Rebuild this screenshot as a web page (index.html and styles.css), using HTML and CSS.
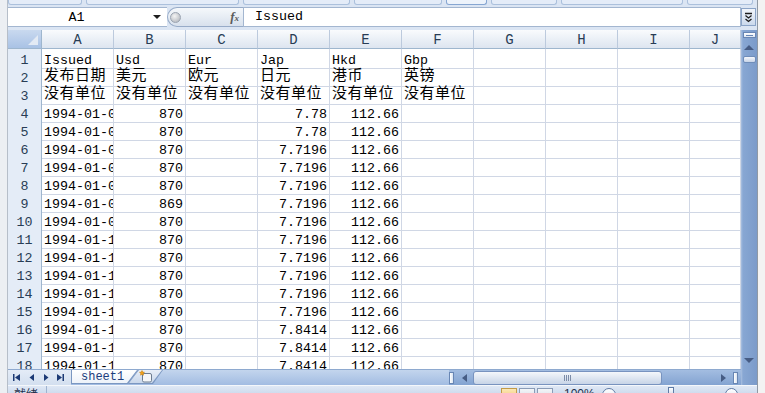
FILE: index.html
```html
<!DOCTYPE html>
<html lang="zh-CN">
  <head>
    <meta charset="UTF-8" />
    <title>sheet1</title>
    <link rel="stylesheet" href="styles.css">
  </head>
  <body>
    <div class="frame-left"></div>

    <div class="excel">
      <div class="ribbon-edge">
        <span></span><span></span><span></span><span></span>
        <span class="on"></span><span></span><span></span><span></span>
      </div>

      <div class="formula-bar">
        <div class="name-box"><span class="ref">A1</span><span class="caret"></span></div>
        <div class="fx-pill"><span class="knob"></span><span class="fx">f<small>x</small></span></div>
        <div class="formula-input">Issued</div>
        <div class="expand">
          <svg width="9" height="11" viewBox="0 0 9 11">
            <path d="M1 1.5h7M1.5 3.5l3 2.5 3-2.5M1.5 7l3 2.5 3-2.5" fill="none" stroke="#1d1d1d" stroke-width="1.3"/>
          </svg>
        </div>
      </div>

      <div class="sheet">
        <div class="grid">
          <div class="row head">
            <div class="corner"></div>
            <div class="ch">A</div><div class="ch">B</div><div class="ch">C</div><div class="ch">D</div><div class="ch">E</div>
            <div class="ch">F</div><div class="ch">G</div><div class="ch">H</div><div class="ch">I</div><div class="ch">J</div>
          </div>
          <div class="row">
            <div class="rh">1</div><div class="c">Issued</div><div class="c">Usd</div><div class="c">Eur</div><div class="c">Jap</div><div class="c">Hkd</div><div class="c">Gbp</div><div class="c"></div><div class="c"></div><div class="c"></div><div class="c"></div>
          </div>
          <div class="row cjk">
            <div class="rh">2</div><div class="c">发布日期</div><div class="c">美元</div><div class="c">欧元</div><div class="c">日元</div><div class="c">港币</div><div class="c">英镑</div><div class="c"></div><div class="c"></div><div class="c"></div><div class="c"></div>
          </div>
          <div class="row cjk">
            <div class="rh">3</div><div class="c">没有单位</div><div class="c">没有单位</div><div class="c">没有单位</div><div class="c">没有单位</div><div class="c">没有单位</div><div class="c">没有单位</div><div class="c"></div><div class="c"></div><div class="c"></div><div class="c"></div>
          </div>
          <div class="row">
            <div class="rh">4</div><div class="c">1994-01-01</div><div class="c n">870</div><div class="c"></div><div class="c n">7.78</div><div class="c n">112.66</div><div class="c"></div><div class="c"></div><div class="c"></div><div class="c"></div><div class="c"></div>
          </div>
          <div class="row">
            <div class="rh">5</div><div class="c">1994-01-02</div><div class="c n">870</div><div class="c"></div><div class="c n">7.78</div><div class="c n">112.66</div><div class="c"></div><div class="c"></div><div class="c"></div><div class="c"></div><div class="c"></div>
          </div>
          <div class="row">
            <div class="rh">6</div><div class="c">1994-01-03</div><div class="c n">870</div><div class="c"></div><div class="c n">7.7196</div><div class="c n">112.66</div><div class="c"></div><div class="c"></div><div class="c"></div><div class="c"></div><div class="c"></div>
          </div>
          <div class="row">
            <div class="rh">7</div><div class="c">1994-01-04</div><div class="c n">870</div><div class="c"></div><div class="c n">7.7196</div><div class="c n">112.66</div><div class="c"></div><div class="c"></div><div class="c"></div><div class="c"></div><div class="c"></div>
          </div>
          <div class="row">
            <div class="rh">8</div><div class="c">1994-01-05</div><div class="c n">870</div><div class="c"></div><div class="c n">7.7196</div><div class="c n">112.66</div><div class="c"></div><div class="c"></div><div class="c"></div><div class="c"></div><div class="c"></div>
          </div>
          <div class="row">
            <div class="rh">9</div><div class="c">1994-01-06</div><div class="c n">869</div><div class="c"></div><div class="c n">7.7196</div><div class="c n">112.66</div><div class="c"></div><div class="c"></div><div class="c"></div><div class="c"></div><div class="c"></div>
          </div>
          <div class="row">
            <div class="rh">10</div><div class="c">1994-01-07</div><div class="c n">870</div><div class="c"></div><div class="c n">7.7196</div><div class="c n">112.66</div><div class="c"></div><div class="c"></div><div class="c"></div><div class="c"></div><div class="c"></div>
          </div>
          <div class="row">
            <div class="rh">11</div><div class="c">1994-01-10</div><div class="c n">870</div><div class="c"></div><div class="c n">7.7196</div><div class="c n">112.66</div><div class="c"></div><div class="c"></div><div class="c"></div><div class="c"></div><div class="c"></div>
          </div>
          <div class="row">
            <div class="rh">12</div><div class="c">1994-01-11</div><div class="c n">870</div><div class="c"></div><div class="c n">7.7196</div><div class="c n">112.66</div><div class="c"></div><div class="c"></div><div class="c"></div><div class="c"></div><div class="c"></div>
          </div>
          <div class="row">
            <div class="rh">13</div><div class="c">1994-01-12</div><div class="c n">870</div><div class="c"></div><div class="c n">7.7196</div><div class="c n">112.66</div><div class="c"></div><div class="c"></div><div class="c"></div><div class="c"></div><div class="c"></div>
          </div>
          <div class="row">
            <div class="rh">14</div><div class="c">1994-01-13</div><div class="c n">870</div><div class="c"></div><div class="c n">7.7196</div><div class="c n">112.66</div><div class="c"></div><div class="c"></div><div class="c"></div><div class="c"></div><div class="c"></div>
          </div>
          <div class="row">
            <div class="rh">15</div><div class="c">1994-01-14</div><div class="c n">870</div><div class="c"></div><div class="c n">7.7196</div><div class="c n">112.66</div><div class="c"></div><div class="c"></div><div class="c"></div><div class="c"></div><div class="c"></div>
          </div>
          <div class="row">
            <div class="rh">16</div><div class="c">1994-01-15</div><div class="c n">870</div><div class="c"></div><div class="c n">7.8414</div><div class="c n">112.66</div><div class="c"></div><div class="c"></div><div class="c"></div><div class="c"></div><div class="c"></div>
          </div>
          <div class="row">
            <div class="rh">17</div><div class="c">1994-01-16</div><div class="c n">870</div><div class="c"></div><div class="c n">7.8414</div><div class="c n">112.66</div><div class="c"></div><div class="c"></div><div class="c"></div><div class="c"></div><div class="c"></div>
          </div>
          <div class="row">
            <div class="rh">18</div><div class="c">1994-01-17</div><div class="c n">870</div><div class="c"></div><div class="c n">7.8414</div><div class="c n">112.66</div><div class="c"></div><div class="c"></div><div class="c"></div><div class="c"></div><div class="c"></div>
          </div>
        </div>

        <div class="vscroll">
          <span class="split"><i></i></span>
          <span class="arrow-up"></span>
          <span class="v-thumb"></span>
          <span class="spacer"></span>
          <span class="arrow-down"></span>
        </div>
      </div>

      <div class="bottom">
        <div class="tabs">
          <div class="nav">
            <svg width="62" height="15" viewBox="0 0 62 15">
              <g fill="#1c3a75">
                <rect x="5" y="4" width="1.5" height="7"/>
                <path d="M12 4v7l-5-3.5z"/>
                <path d="M26 4v7l-4.5-3.5z"/>
                <path d="M36 4v7l4.5-3.5z"/>
                <path d="M49 4v7l5-3.5z"/>
                <rect x="54.5" y="4" width="1.5" height="7"/>
              </g>
            </svg>
          </div>
          <div class="sheet-tab"><span>sheet1</span></div>
          <div class="new-tab">
            <span>
              <svg width="14" height="13" viewBox="0 0 14 13">
                <rect x="3.5" y="3.5" width="9" height="8.5" rx="1.5" fill="#f4f6f9" stroke="#6d7c90"/>
                <path d="M3 0.5l0.8 1.6 1.7 0.2-1.3 1.2 0.3 1.7-1.5-0.8-1.5 0.8 0.3-1.7-1.3-1.2 1.7-0.2z" fill="#f2a41e" stroke="#c67a05" stroke-width="0.5"/>
              </svg>
            </span>
          </div>
        </div>
        <div class="hscroll">
          <span class="h-split"></span>
          <span class="arrow-left"></span>
          <span class="h-thumb"><i></i><i></i><i></i><i></i></span>
          <span class="spacer"></span>
          <span class="arrow-right"></span>
          <span class="h-box"></span>
        </div>
        <div class="corner-box"></div>
      </div>

      <div class="status">
        <div class="ready">就绪</div>
        <div class="status-right">
          <div class="views"><span class="on"></span><span></span><span></span></div>
          <div class="zoom-val">100%</div>
          <span class="zoom-btn"></span>
          <div class="slider"><span></span></div>
          <span class="zoom-btn small"></span>
        </div>
      </div>
    </div>

    <div class="frame-right"></div>
  </body>
</html>
```

FILE: styles.css
```css
* {
  box-sizing: border-box;
}
body {
  margin: 0;
  width: 765px;
  height: 393px;
  overflow: hidden;
  display: flex;
  background: #f0f0f0;
  font-family: "Liberation Mono", "Noto Sans CJK SC", monospace;
  color: #000;
}
.frame-left {
  width: 8px;
  background: #eceff3;
  border-right: 1px solid #b6bec9;
}
.frame-right {
  width: 8px;
  background: #f3f3f3;
  border-left: 1px solid #8f99a5;
}
.excel {
  width: 749px;
  display: flex;
  flex-direction: column;
  background: #dbe5f3;
}

/* ribbon group bottoms */
.ribbon-edge {
  height: 7px;
  display: grid;
  grid-template-columns: 74px 153px 107px 88px 41px 66px 122px 66px;
  gap: 4px;
  align-items: start;
}
.ribbon-edge span {
  height: 5px;
  border: 1px solid #abc0dc;
  border-top: none;
  border-radius: 0 0 3px 3px;
  background: #e4ecf8;
}
.ribbon-edge .on {
  background: #edf3fb;
  border-color: #86a6d2;
}

/* formula bar */
.formula-bar {
  height: 20px;
  display: flex;
  margin-bottom: 3px;
}
.name-box {
  width: 159px;
  display: flex;
  align-items: center;
  background: #fff;
  border-top: 1px solid #a3b6d0;
  border-bottom: 1px solid #a3b6d0;
  font-size: 13.33px;
}
.name-box .ref {
  flex: 1;
  text-align: center;
  padding-right: 8px;
}
.caret {
  width: 0;
  height: 0;
  border-left: 4px solid transparent;
  border-right: 4px solid transparent;
  border-top: 4px solid #1e1e1e;
  margin-right: 6px;
}
.fx-pill {
  width: 76px;
  display: flex;
  align-items: center;
  justify-content: space-between;
  padding: 0 4px 0 2px;
  background: linear-gradient(#f5f8fb, #d8e1ed);
  border: 1px solid #97abc8;
  border-right: none;
  border-radius: 10px 0 0 10px;
}
.knob {
  width: 11px;
  height: 11px;
  border-radius: 50%;
  background: radial-gradient(circle at 40% 35%, #f4f4f4, #a9aeb6);
  border: 1px solid #9aa3b0;
}
.fx {
  font-family: "Liberation Serif", serif;
  font-style: italic;
  font-weight: bold;
  font-size: 13px;
  color: #5b5b5b;
}
.fx small {
  font-size: 9px;
}
.formula-input {
  flex: 1;
  background: #fff;
  border: 1px solid #a3b6d0;
  padding-left: 11px;
  font-size: 13.33px;
  line-height: 18px;
}
.expand {
  width: 15px;
  margin: 1px 1px 1px 0;
  display: flex;
  align-items: center;
  justify-content: center;
  background: linear-gradient(#f1f5fb, #cbd9ec);
  border: 1px solid #8ba4c7;
}

/* sheet grid */
.sheet {
  height: 339px;
  display: flex;
}
.grid {
  width: 733px;
  overflow: hidden;
  background: #fff;
}
.row {
  display: grid;
  grid-template-columns: 34px repeat(9, 72px) 51px;
  height: 18px;
}
.row.head {
  height: 19px;
}
.corner {
  display: flex;
  justify-content: flex-end;
  align-items: flex-end;
  padding: 0 3px 3px 0;
  background: linear-gradient(#c9d9ef, #a9c2e5);
  border-right: 1px solid #9eb6ce;
  border-bottom: 1px solid #9eb6ce;
}
.corner::after {
  content: "";
  border-left: 10px solid transparent;
  border-bottom: 10px solid #e3eaf4;
}
.ch {
  background: linear-gradient(#f9fbfd, #dde5f0);
  border-right: 1px solid #bccadd;
  border-bottom: 1px solid #9eb6ce;
  text-align: center;
  color: #283c55;
  font-size: 14px;
  line-height: 15px;
  padding-top: 3px;
}
.rh {
  background: #e4ecf7;
  border-right: 1px solid #9eb6ce;
  border-bottom: 1px solid #c5d2e4;
  text-align: center;
  color: #283c55;
  font-size: 13.33px;
  line-height: 15px;
  padding-top: 4px;
}
.c {
  border-right: 1px solid #d0d7e5;
  border-bottom: 1px solid #d0d7e5;
  padding: 4px 2px 0 2px;
  font-size: 13.33px;
  line-height: 15px;
  white-space: nowrap;
  overflow: hidden;
}
.n {
  text-align: right;
}
.cjk .c {
  font-size: 15px;
  line-height: 16px;
  padding-top: 2px;
  letter-spacing: 0.5px;
}

/* vertical scrollbar */
.vscroll {
  width: 16px;
  display: flex;
  flex-direction: column;
  align-items: center;
  padding: 2px 0 6px;
  background: linear-gradient(90deg, #a9c0e0 0, #88a7d3 2px, #7b9bca);
}
.split {
  width: 13px;
  height: 6px;
  display: flex;
  align-items: center;
  justify-content: center;
  border: 1px solid #6886b4;
  background: linear-gradient(#ffffff, #dae4f2);
}
.split i {
  width: 7px;
  height: 1px;
  background: #6886b4;
}
.arrow-up {
  margin-top: 7px;
  border-left: 5px solid transparent;
  border-right: 5px solid transparent;
  border-bottom: 5px solid #465c84;
}
.v-thumb {
  width: 13px;
  height: 7px;
  margin-top: 6px;
  border: 1px solid #6f8db9;
  border-radius: 2px;
  background: linear-gradient(#f6f8fc, #c6d3e7);
}
.spacer {
  flex: 1;
}
.arrow-down {
  border-left: 5px solid transparent;
  border-right: 5px solid transparent;
  border-top: 5px solid #465c84;
}

/* sheet tabs + horizontal scrollbar */
.bottom {
  height: 16px;
  display: flex;
}
.tabs {
  width: 441px;
  display: flex;
  background: linear-gradient(#c3d5ed, #a2bce2);
  border-top: 1px solid #8ea9cf;
}
.nav {
  width: 63px;
  background: linear-gradient(#e4ecf7, #d3dfef);
}
.nav svg {
  display: block;
}
.sheet-tab {
  width: 67px;
  height: 14px;
  padding: 0 1px 1px 1px;
  background: #7b97c1;
  clip-path: polygon(0 0, 100% 0, calc(100% - 10px) 100%, 0 100%);
}
.sheet-tab span {
  display: block;
  height: 100%;
  padding-left: 9px;
  background: linear-gradient(#ffffff, #edf2f9);
  clip-path: polygon(0 0, 100% 0, calc(100% - 10px) 100%, 0 100%);
  font-size: 12px;
  line-height: 14px;
  color: #1b3d7c;
}
.new-tab {
  width: 35px;
  height: 14px;
  margin-left: -10px;
  padding: 0 1px 1px;
  background: #7b97c1;
  clip-path: polygon(10px 0, 100% 0, calc(100% - 10px) 100%, 0 100%);
}
.new-tab span {
  display: flex;
  align-items: center;
  justify-content: center;
  height: 100%;
  background: linear-gradient(#e8eef7, #c9d7eb);
  clip-path: polygon(10px 0, 100% 0, calc(100% - 10px) 100%, 0 100%);
}
.hscroll {
  width: 292px;
  display: flex;
  align-items: center;
  background: linear-gradient(#a3bde1, #83a3d1);
  border-top: 1px solid #8ea9cf;
}
.h-split {
  width: 5px;
  height: 12px;
  border: 1px solid #6886b4;
  background: linear-gradient(90deg, #ffffff, #dae4f2);
}
.arrow-left {
  margin-left: 8px;
  border-top: 4px solid transparent;
  border-bottom: 4px solid transparent;
  border-right: 5px solid #465c84;
}
.h-thumb {
  width: 189px;
  height: 14px;
  margin-left: 6px;
  display: flex;
  justify-content: center;
  align-items: center;
  gap: 1px;
  border: 1px solid #7893bf;
  border-radius: 3px;
  background: linear-gradient(#f4f7fb, #c7d4e7);
}
.h-thumb i {
  width: 1px;
  height: 6px;
  background: #7c8ca8;
}
.arrow-right {
  border-top: 4px solid transparent;
  border-bottom: 4px solid transparent;
  border-left: 5px solid #465c84;
}
.h-box {
  width: 5px;
  height: 12px;
  margin: 0 3px 0 7px;
  border: 1px solid #6886b4;
  background: linear-gradient(90deg, #ffffff, #dae4f2);
}
.corner-box {
  width: 16px;
  background: linear-gradient(90deg, #a9c0e0 0, #88a7d3 2px, #7b9bca);
}

/* status bar */
.status {
  height: 8px;
  display: flex;
  overflow: hidden;
  background: linear-gradient(#dfe8f5, #cfdcee);
  border-top: 1px solid #f4f7fb;
}
.ready {
  width: 39px;
  padding-left: 6px;
  border-right: 1px solid #9fb3d0;
  font-family: "Noto Sans CJK SC", sans-serif;
  font-size: 12px;
  line-height: 16px;
  color: #1e2e4a;
}
.status-right {
  margin-left: auto;
  display: flex;
  align-items: flex-start;
  padding-right: 19px;
}
.views {
  display: flex;
  gap: 2px;
  margin-top: 2px;
}
.views span {
  width: 16px;
  height: 12px;
  border: 1px solid #8a9cb7;
  background: linear-gradient(#f3f5f8, #d6dde8);
}
.views .on {
  border-color: #c29b4a;
  background: linear-gradient(#fbe7b4, #f5c872);
}
.zoom-val {
  margin-left: 11px;
  font-family: "Liberation Sans", sans-serif;
  font-size: 12px;
  line-height: 16px;
  color: #1e2e4a;
  width: 38px;
}
.zoom-btn {
  width: 14px;
  height: 14px;
  margin-top: 2px;
  border-radius: 50%;
  border: 1px solid #5f7ba6;
  background: linear-gradient(#ffffff, #d7e1ef);
}
.zoom-btn.small {
  width: 13px;
  height: 13px;
}
.slider {
  width: 109px;
  display: flex;
  justify-content: center;
  padding-top: 1px;
}
.slider span {
  width: 6px;
  height: 10px;
  border: 1px solid #5f7ba6;
  background: linear-gradient(#ffffff, #c9d6ea);
}
```
